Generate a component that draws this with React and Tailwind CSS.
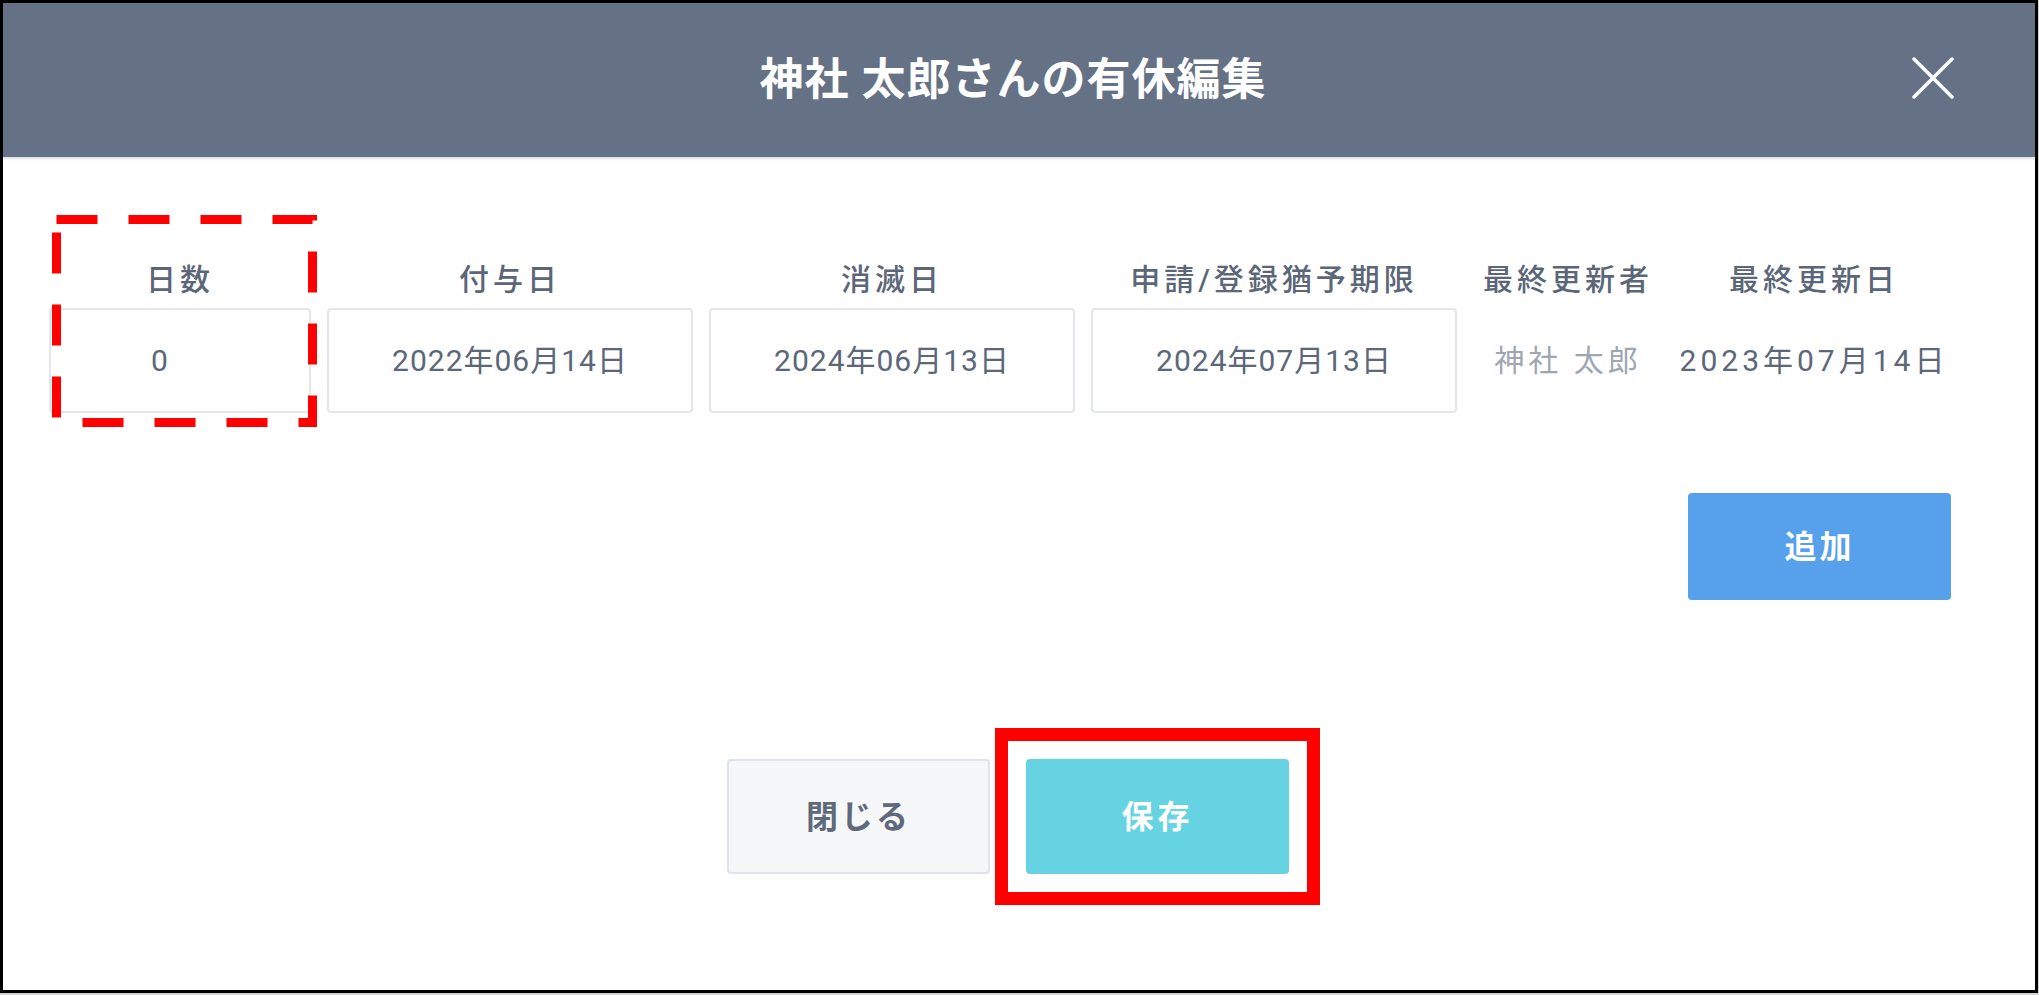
import React from 'react';

const FONT = { fontFamily: 'Roboto, "Noto Sans CJK JP", sans-serif' };

const columns = [
    { label: '日数', value: '0', kind: 'input', pad: 'pr-[40px]' },
    { label: '付与日', value: '2022年06月14日', kind: 'input' },
    { label: '消滅日', value: '2024年06月13日', kind: 'input' },
    { label: '申請/登録猶予期限', value: '2024年07月13日', kind: 'input' },
    { label: '最終更新者', value: '神社 太郎', kind: 'muted' },
    { label: '最終更新日', value: '2023年07月14日', kind: 'text' },
];

function CloseIcon() {
    return (
        <svg width="42" height="42" viewBox="0 0 42 42" fill="none">
            <path d="M2 2L40 40M40 2L2 40" stroke="white" strokeWidth="3.5" strokeLinecap="round" />
        </svg>
    );
}

function Cell({ col }) {
    return (
        <div className="flex flex-col items-center">
            <div className="h-[40px] leading-[40px] text-[30px] font-medium tracking-[4px] text-[#5b6678]">
                {col.label}
            </div>
            {col.kind === 'input' ? (
                <div className={`mt-[8px] w-full h-[105px] flex items-center justify-center rounded-[4px] border-2 border-[#e3e7ec] bg-white text-[30px] tracking-[1px] text-[#5c6779] ${col.pad || ''}`}>
                    {col.value}
                </div>
            ) : (
                <div className={`mt-[8px] w-full h-[105px] flex items-center justify-center text-[30px] tracking-[4px] ${col.kind === 'muted' ? 'text-[#9ea6b1]' : 'text-[#5c6779]'}`}>
                    {col.value}
                </div>
            )}
        </div>
    );
}

export default function App() {
    return (
        <div className="w-[2039px] h-[995px] bg-[#d4d4d4]" style={FONT}>
            <div className="relative w-[2038px] h-[993px] border-[3px] border-black bg-white flex flex-col">
                {/* header */}
                <div className="relative h-[154px] flex-shrink-0 bg-[#657185] flex items-center justify-center pr-[12px] shadow-[0_2px_2px_rgba(0,0,0,0.12)]">
                    <h1 className="text-[44px] font-bold tracking-[1px] text-white">神社 太郎さんの有休編集</h1>
                    <button className="absolute right-[81px] top-[54px]">
                        <CloseIcon />
                    </button>
                </div>

                {/* body */}
                <div className="pl-[46px] pt-[103px]">
                    <div className="w-[1902px]">
                        <div className="grid grid-cols-[262px_366px_366px_366px_190px_270px] gap-x-[16px]">
                            {columns.map((col) => (
                                <Cell key={col.label} col={col} />
                            ))}
                        </div>
                        <div className="flex justify-end mt-[80px]">
                            <button className="w-[263px] h-[107px] rounded-[4px] bg-[#57a0eb] text-white text-[32px] font-bold tracking-[3px]">
                                追加
                            </button>
                        </div>
                    </div>
                </div>

                {/* footer buttons */}
                <div className="flex items-center justify-center mt-[128px] pl-[9px]">
                    <button className="w-[263px] h-[115px] rounded-[4px] border-2 border-[#dfe4ea] bg-[#f6f7f9] text-[#5e6a7b] text-[32px] font-bold tracking-[3px]">
                        閉じる
                    </button>
                    <div className="ml-[5px] border-[13px] border-[#ff0000] p-[18px]">
                        <button className="w-[263px] h-[115px] rounded-[4px] bg-[#66d3e3] text-white text-[32px] font-bold tracking-[4px]">
                            保存
                        </button>
                    </div>
                </div>

                {/* dashed annotation */}
                <svg className="absolute left-[49px] top-[212px] pointer-events-none" width="270" height="218" viewBox="0 0 270 218">
                    <rect x="4.5" y="4.5" width="256" height="203" fill="none" stroke="#ff0000" strokeWidth="9" strokeDasharray="41 31" />
                </svg>
            </div>
        </div>
    );
}
